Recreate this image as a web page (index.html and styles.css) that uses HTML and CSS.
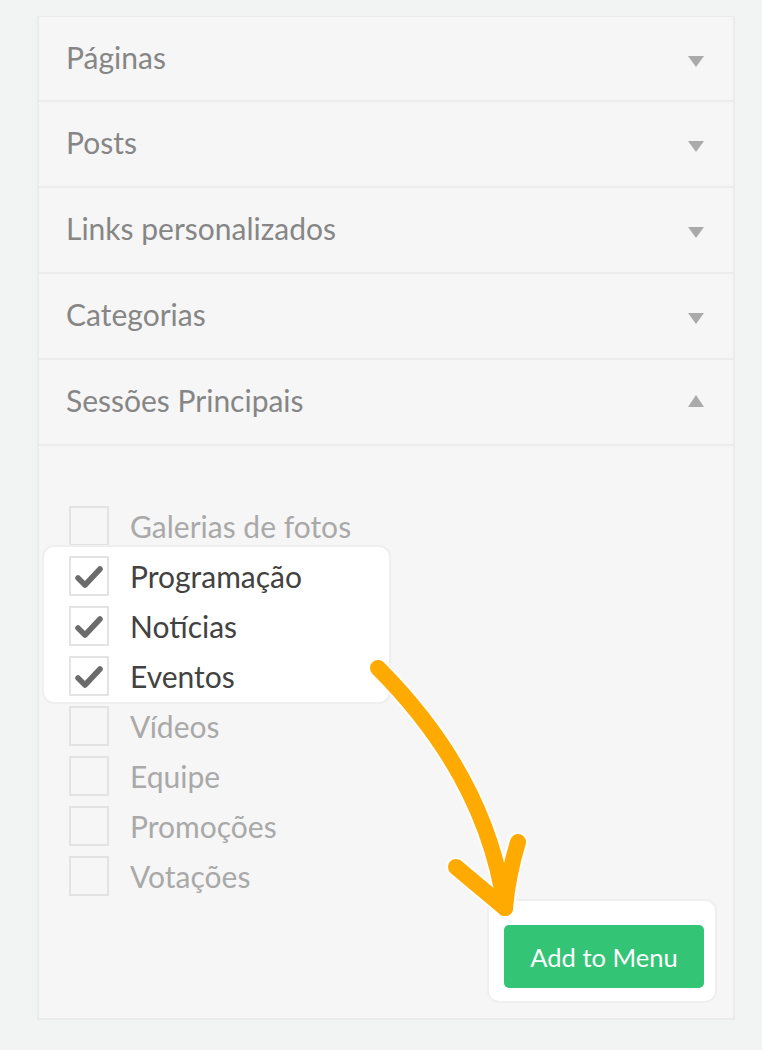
FILE: index.html
```html
<!DOCTYPE html>
<html lang="pt">
<head>
<meta charset="utf-8">
<link rel="stylesheet" href="styles.css">
</head>
<body>
<div class="panel">
  <div class="section"><span class="title">Páginas</span><span class="caret down"></span></div>
  <div class="section"><span class="title">Posts</span><span class="caret down"></span></div>
  <div class="section"><span class="title">Links personalizados</span><span class="caret down"></span></div>
  <div class="section"><span class="title">Categorias</span><span class="caret down"></span></div>
  <div class="section"><span class="title">Sessões Principais</span><span class="caret up"></span></div>
  <div class="body">
    <div class="list">
      <label class="item"><span class="box"></span><span class="label">Galerias de fotos</span></label>
      <div class="group">
        <label class="item checked"><span class="box"><svg viewBox="0 0 40 40" width="40" height="40"><path d="M9 22 L16 29 L31 13" fill="none" stroke="#6b6b6b" stroke-width="5.5" stroke-linecap="round" stroke-linejoin="round"/></svg></span><span class="label">Programação</span></label>
        <label class="item checked"><span class="box"><svg viewBox="0 0 40 40" width="40" height="40"><path d="M9 22 L16 29 L31 13" fill="none" stroke="#6b6b6b" stroke-width="5.5" stroke-linecap="round" stroke-linejoin="round"/></svg></span><span class="label">Notícias</span></label>
        <label class="item checked"><span class="box"><svg viewBox="0 0 40 40" width="40" height="40"><path d="M9 22 L16 29 L31 13" fill="none" stroke="#6b6b6b" stroke-width="5.5" stroke-linecap="round" stroke-linejoin="round"/></svg></span><span class="label">Eventos</span></label>
      </div>
      <label class="item"><span class="box"></span><span class="label">Vídeos</span></label>
      <label class="item"><span class="box"></span><span class="label">Equipe</span></label>
      <label class="item"><span class="box"></span><span class="label">Promoções</span></label>
      <label class="item"><span class="box"></span><span class="label">Votações</span></label>
    </div>
    <div class="actions">
      <div class="btn-wrap"><button class="btn">Add to Menu</button></div>
    </div>
  </div>
</div>
<svg class="arrow" width="762" height="1050" viewBox="0 0 762 1050">
  <g fill="none" stroke="#ffffff" stroke-width="20" stroke-linecap="round" stroke-linejoin="round" opacity="0.8">
    <path d="M378 668 C430 720 490 800 505 908"/>
    <path d="M456 867 L505 908"/>
    <path d="M518 842 Q508 875 505 908"/>
  </g>
  <g fill="none" stroke="#ffaa00" stroke-width="16" stroke-linecap="round" stroke-linejoin="round">
    <path d="M378 668 C430 720 490 800 505 908"/>
    <path d="M456 867 L505 908"/>
    <path d="M518 842 Q508 875 505 908"/>
  </g>
</svg>
</body>
</html>
```
FILE: styles.css
```css
html, body {
  margin: 0;
  padding: 0;
}
body {
  background: #f2f3f3;
  font-family: Lato, "Open Sans", sans-serif;
  width: 762px;
  height: 1050px;
  overflow: hidden;
  position: relative;
}
.panel {
  margin: 16px 0 0 37px;
  width: 698px;
  height: 1004px;
  box-sizing: border-box;
  border: 2px solid #ebebeb;
  border-top-width: 1px;
  background: #f6f6f6;
  display: flex;
  flex-direction: column;
}
.section {
  height: 86px;
  box-sizing: border-box;
  border-bottom: 2px solid #ececec;
  display: flex;
  align-items: center;
  justify-content: space-between;
  padding: 0 29px 0 27px;
  flex: none;
}
.section:first-child {
  height: 85px;
}
.title {
  font-size: 30px;
  color: #868686;
  margin-bottom: 4px;
}
.caret {
  width: 0;
  height: 0;
  border-left: 8px solid transparent;
  border-right: 8px solid transparent;
}
.caret.down {
  border-top: 11px solid #aaaaaa;
  margin-top: 5px;
}
.caret.up {
  border-bottom: 12px solid #aaaaaa;
  margin-top: -2px;
}
.body {
  flex: 1;
  display: flex;
  flex-direction: column;
  justify-content: space-between;
  padding: 60px 18px 17px 30px;
}
.list {
  display: flex;
  flex-direction: column;
  gap: 10px;
}
.item {
  display: flex;
  align-items: center;
  gap: 21px;
  height: 40px;
}
.box {
  width: 40px;
  height: 40px;
  box-sizing: border-box;
  border: 2px solid #e3e3e3;
  flex: none;
  display: flex;
  align-items: center;
  justify-content: center;
}
.box svg {
  flex: none;
}
.label {
  font-size: 30px;
  color: #a9a9a9;
}
.item.checked .label {
  color: #424242;
}
.group {
  display: flex;
  flex-direction: column;
  gap: 10px;
  background: #ffffff;
  border-radius: 10px;
  box-shadow: 0 0 0 2px #efefef;
  width: 345px;
  box-sizing: border-box;
  margin: -9px 0 -6px -25px;
  padding: 9px 0 6px 25px;
}
.actions {
  display: flex;
  justify-content: flex-end;
}
.btn-wrap {
  background: #ffffff;
  border-radius: 10px;
  box-shadow: 0 0 0 2px #efefef;
  padding: 24px 11px 13px 15px;
}
.btn {
  display: block;
  width: 200px;
  height: 63px;
  border: none;
  border-radius: 5px;
  background: #33c575;
  color: #ffffff;
  font-family: Lato, "Open Sans", sans-serif;
  font-size: 25.5px;
  padding: 0;
}
.arrow {
  position: absolute;
  top: 0;
  left: 0;
  pointer-events: none;
}
```
